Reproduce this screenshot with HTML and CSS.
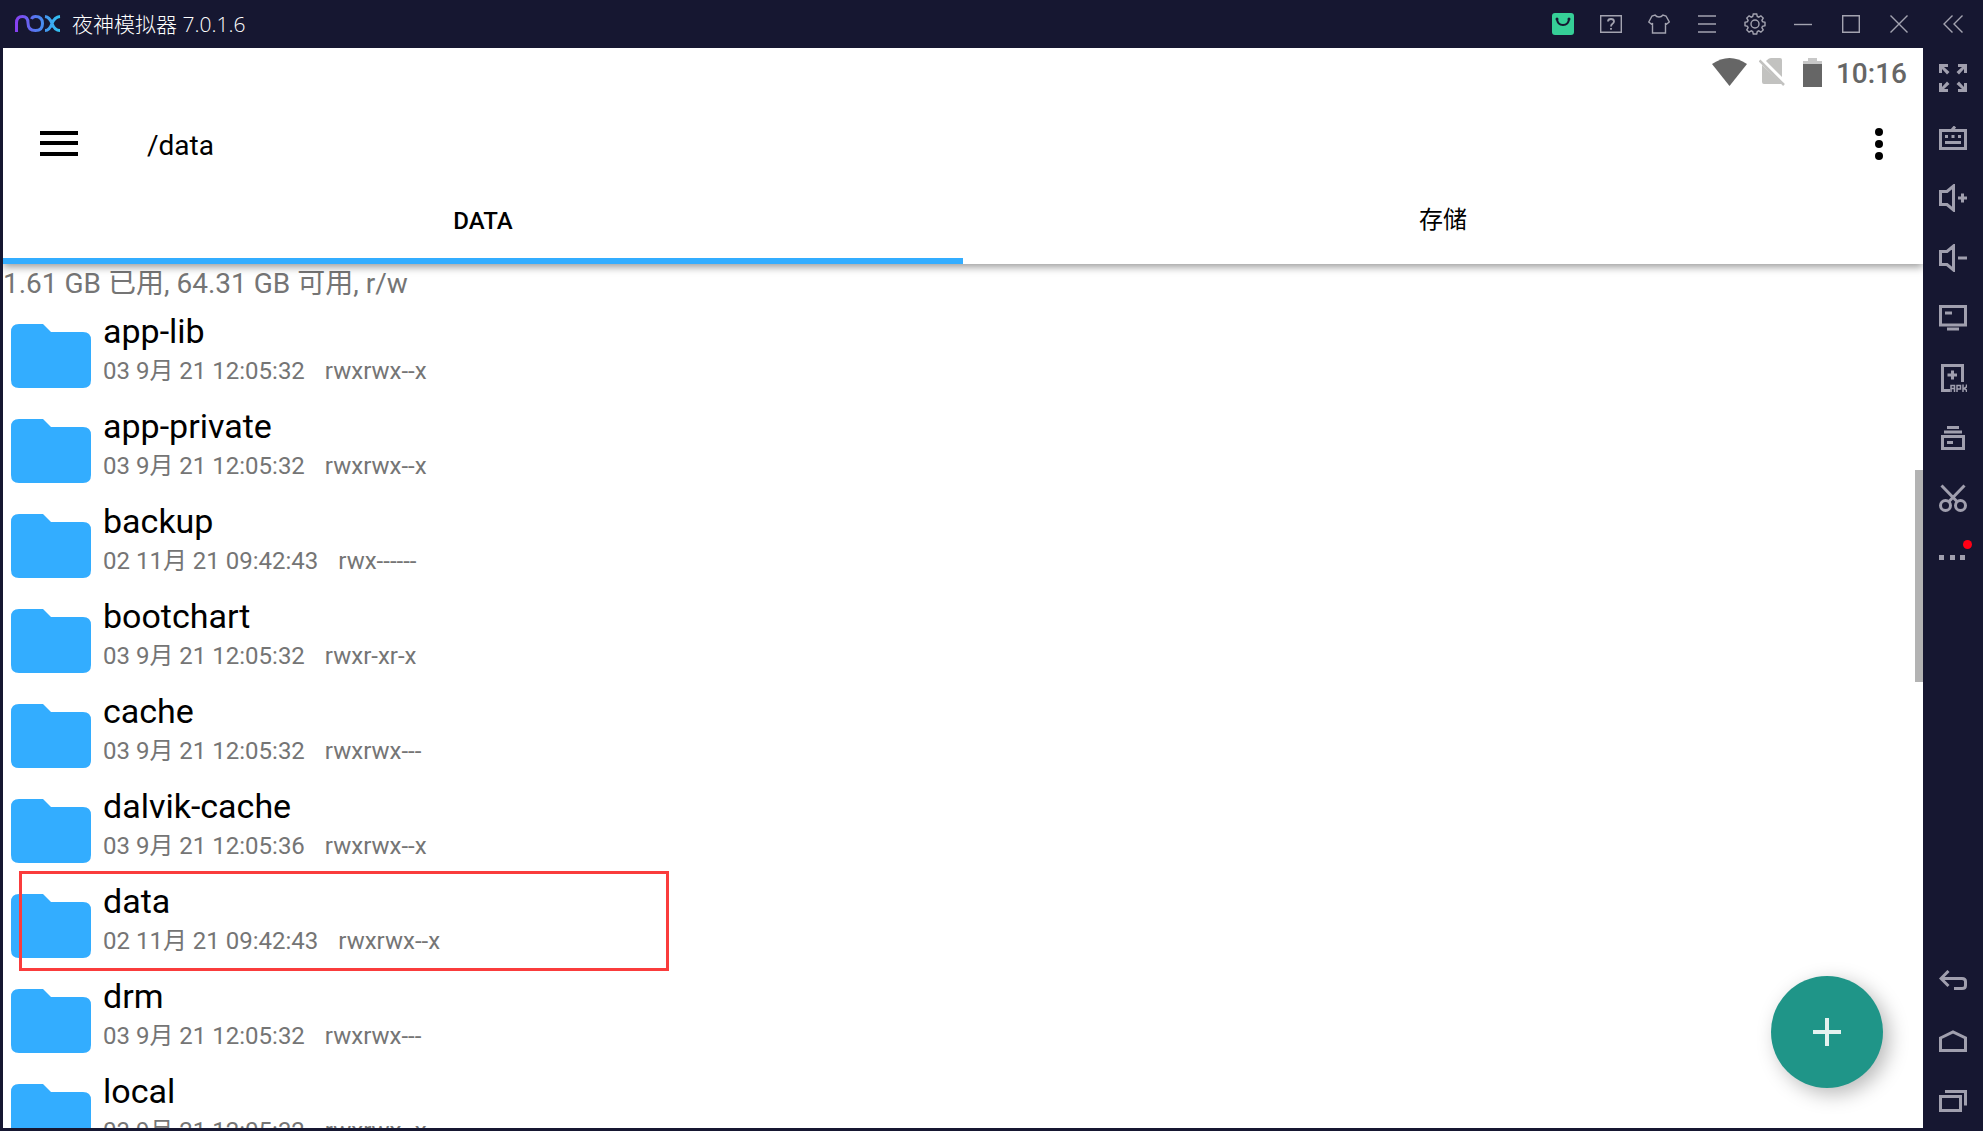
FILE: index.html
```html
<!DOCTYPE html>
<html lang="zh-CN">
<head>
    <meta charset="UTF-8">
    <meta name="viewport" content="width=device-width, initial-scale=1.0">
    <title>夜神模拟器</title>
    <link rel="stylesheet" href="styles.css">
</head>
<body>
    <svg class="sprite" aria-hidden="true">
        <symbol id="folder" viewBox="0 0 80 64">
            <path d="M32 0H8Q0 0 0 8V56Q0 64 8 64H72Q80 64 80 56V16Q80 8 72 8H40Z"/>
        </symbol>
    </svg>

    <header class="title-bar">
        <svg class="logo" viewBox="0 0 46 18" width="46" height="18" fill="none" stroke-width="3">
            <defs>
                <linearGradient id="nox" gradientUnits="userSpaceOnUse" x1="0" y1="0" x2="46" y2="0">
                    <stop offset="0" stop-color="#8a3df0"/>
                    <stop offset=".5" stop-color="#4f7ff0"/>
                    <stop offset="1" stop-color="#2fc8f2"/>
                </linearGradient>
            </defs>
            <path stroke="url(#nox)" d="M1.5 17V8Q1.500 1.500 7.500 1.500Q13 1.500 13 8Q13 15.500 20.500 15.500Q27.500 15.500 27.500 8.500Q27.500 1.500 20.500 1.500Q17.500 1.500 16.500 4M30 1.500Q34.500 2 37 8.500Q39.500 15.500 45 15.500M45 1.500Q39.500 2 37 8.500Q34.500 15.500 30 15.500"/>
        </svg>
        <h1 class="app-title">夜神模拟器 7.0.1.6</h1>
        <div class="window-buttons">
            <button class="bar-btn" aria-label="应用中心">
                <svg width="22" height="22" viewBox="0 0 22 22"><rect width="22" height="22" rx="3" fill="#36cf97"/><path d="M5 6Q5.500 12 11 12Q16.500 12 17 6" fill="none" stroke="#161731" stroke-width="2"/><circle cx="5" cy="6" r="1.500" fill="#161731"/><circle cx="17" cy="6" r="1.500" fill="#161731"/></svg>
            </button>
            <button class="bar-btn" aria-label="帮助">
                <svg class="line" width="22" height="18" viewBox="0 0 22 18"><path d="M.7.7H21.300V17.300H.7Z"/><path stroke-width="1.800" d="M8 6.500Q8 4 11 4Q14 4 14 6.500Q14 7.700 12.500 8.700Q11 9.700 11 11.500M11 13V14.800"/></svg>
            </button>
            <button class="bar-btn" aria-label="皮肤">
                <svg class="line" width="22" height="20" viewBox="0 0 22 20"><path d="M7 1Q8.500 3 11 3Q13.500 3 15 1L18 2L21.300 8L18 10.500L17.500 9V19H4.500V9L4 10.500L.8 8L4 2Z"/></svg>
            </button>
            <button class="bar-btn" aria-label="菜单">
                <svg class="line" width="18" height="18" viewBox="0 0 18 18"><path d="M0 1H18M0 9H18M0 17H18"/></svg>
            </button>
            <button class="bar-btn" aria-label="设置">
                <svg class="line" width="22" height="22" viewBox="0 0 22 22"><circle cx="11" cy="11" r="4"/><path d="M9.300 1H12.700L13.300 3.500L14.700 4.100L16.900 2.800L19.200 5.100L17.900 7.300L18.500 8.700L21 9.300V12.700L18.500 13.300L17.900 14.700L19.200 16.900L16.900 19.200L14.700 17.900L13.300 18.500L12.700 21H9.300L8.700 18.500L7.300 17.900L5.100 19.200L2.800 16.900L4.100 14.700L3.500 13.300L1 12.700V9.300L3.500 8.700L4.100 7.300L2.800 5.100L5.100 2.800L7.300 4.100L8.700 3.500Z"/></svg>
            </button>
            <button class="bar-btn" aria-label="最小化">
                <svg class="line" width="18" height="18" viewBox="0 0 18 18"><path d="M0 9.500H18"/></svg>
            </button>
            <button class="bar-btn" aria-label="最大化">
                <svg class="line" width="18" height="18" viewBox="0 0 18 18"><path d="M.7.7H17.300V17.300H.7Z"/></svg>
            </button>
            <button class="bar-btn" aria-label="关闭">
                <svg class="line" width="18" height="18" viewBox="0 0 18 18"><path d="M.5.5L17.500 17.500M17.500.5L.5 17.500"/></svg>
            </button>
            <button class="bar-btn side" aria-label="收起">
                <svg class="line" width="20" height="18" viewBox="0 0 20 18"><path d="M9.500.5L1 9L9.500 17.500M19.500.5L11 9L19.500 17.500"/></svg>
            </button>
        </div>
    </header>

    <div class="window">
        <main class="screen">
            <div class="app-bar">
                <div class="status-bar">
                    <svg class="wifi" width="35" height="28" viewBox="0 0 35 28"><path d="M0 6Q17.500-6 35 6L17.500 28Z"/></svg>
                    <svg class="no-sim" width="26" height="28" viewBox="0 0 26 28"><path d="M8 2Q10 0 12 0H21Q23 0 23 2V19L7 3ZM3 7L23 26Q22 26 21 26H5Q3 26 3 24Z"/><path d="M.5 2.500L25 27" fill="none" stroke="#c2c2c0" stroke-width="2.500"/></svg>
                    <svg class="battery" width="19" height="29" viewBox="0 0 19 29"><path fill="#c8c8c8" d="M5 0H14V3H19V6H0V3H5Z"/><path d="M0 6H19V29H0Z"/></svg>
                    <span class="clock">10:16</span>
                </div>
                <div class="toolbar">
                    <button class="icon-btn" aria-label="打开菜单">
                        <svg width="38" height="28" viewBox="0 0 38 28"><path d="M0 1H38V5H0ZM0 11H38V15H0ZM0 22H38V26H0Z"/></svg>
                    </button>
                    <h2 class="path">/data</h2>
                    <button class="icon-btn" aria-label="更多选项">
                        <svg width="8" height="32" viewBox="0 0 8 32"><circle cx="4" cy="4" r="4"/><circle cx="4" cy="16" r="4"/><circle cx="4" cy="28" r="4"/></svg>
                    </button>
                </div>
                <nav class="tabs">
                    <button class="tab active">DATA</button>
                    <button class="tab">存储</button>
                </nav>
            </div>

            <div class="content">
                <p class="usage">1.61 GB 已用, 64.31 GB 可用, r/w</p>
                <ul class="file-list">
                    <li class="file">
                        <svg class="folder"><use href="#folder"/></svg>
                        <div class="info">
                            <h3 class="name">app-lib</h3>
                            <p class="meta"><span>03 9月 21 12:05:32</span><span>rwxrwx--x</span></p>
                        </div>
                    </li>
                    <li class="file">
                        <svg class="folder"><use href="#folder"/></svg>
                        <div class="info">
                            <h3 class="name">app-private</h3>
                            <p class="meta"><span>03 9月 21 12:05:32</span><span>rwxrwx--x</span></p>
                        </div>
                    </li>
                    <li class="file">
                        <svg class="folder"><use href="#folder"/></svg>
                        <div class="info">
                            <h3 class="name">backup</h3>
                            <p class="meta"><span>02 11月 21 09:42:43</span><span>rwx------</span></p>
                        </div>
                    </li>
                    <li class="file">
                        <svg class="folder"><use href="#folder"/></svg>
                        <div class="info">
                            <h3 class="name">bootchart</h3>
                            <p class="meta"><span>03 9月 21 12:05:32</span><span>rwxr-xr-x</span></p>
                        </div>
                    </li>
                    <li class="file">
                        <svg class="folder"><use href="#folder"/></svg>
                        <div class="info">
                            <h3 class="name">cache</h3>
                            <p class="meta"><span>03 9月 21 12:05:32</span><span>rwxrwx---</span></p>
                        </div>
                    </li>
                    <li class="file">
                        <svg class="folder"><use href="#folder"/></svg>
                        <div class="info">
                            <h3 class="name">dalvik-cache</h3>
                            <p class="meta"><span>03 9月 21 12:05:36</span><span>rwxrwx--x</span></p>
                        </div>
                    </li>
                    <li class="file marked">
                        <svg class="folder"><use href="#folder"/></svg>
                        <div class="info">
                            <h3 class="name">data</h3>
                            <p class="meta"><span>02 11月 21 09:42:43</span><span>rwxrwx--x</span></p>
                        </div>
                    </li>
                    <li class="file">
                        <svg class="folder"><use href="#folder"/></svg>
                        <div class="info">
                            <h3 class="name">drm</h3>
                            <p class="meta"><span>03 9月 21 12:05:32</span><span>rwxrwx---</span></p>
                        </div>
                    </li>
                    <li class="file">
                        <svg class="folder"><use href="#folder"/></svg>
                        <div class="info">
                            <h3 class="name">local</h3>
                            <p class="meta"><span>03 9月 21 12:05:32</span><span>rwxrwx--x</span></p>
                        </div>
                    </li>
                </ul>
                <div class="scroll-thumb"></div>
            </div>
            <button class="fab" aria-label="新建">
                <svg width="28" height="28" viewBox="0 0 28 28"><path d="M12 0H16V12H28V16H16V28H12V16H0V12H12Z"/></svg>
            </button>
        </main>

        <aside class="side-bar">
            <button class="side-btn" aria-label="全屏">
                <svg class="solid" width="28" height="28" viewBox="0 0 28 28"><path d="M0 0H9V3H5L10.500 8L8 10.500L3 5V9H0ZM28 0V9H25V5L20 10.500L17.500 8L23 3H19V0ZM0 28V19H3V23L8 17.500L10.500 20L5 25H9V28ZM28 28H19V25H23L17.500 20L20 17.500L25 23V19H28Z"/></svg>
            </button>
            <button class="side-btn" aria-label="键盘控制">
                <svg class="thick" width="28" height="24" viewBox="0 0 28 24"><path d="M1.500 4.500H26.500V22.500H1.500ZM13 4L16 .5M6 10.500H9M12.500 10.500H15.500M19 10.500H22M6 16.500H22"/></svg>
            </button>
            <button class="side-btn" aria-label="音量加">
                <svg class="thick" width="28" height="28" viewBox="0 0 28 28"><path d="M1.500 7.500H8L14.500 2V26L8 20.500H1.500ZM19 14H28M23.500 9.500V18.500"/></svg>
            </button>
            <button class="side-btn" aria-label="音量减">
                <svg class="thick" width="28" height="28" viewBox="0 0 28 28"><path d="M1.500 7.500H8L14.500 2V26L8 20.500H1.500ZM19 14H28"/></svg>
            </button>
            <button class="side-btn" aria-label="虚拟桌面">
                <svg class="thick" width="28" height="26" viewBox="0 0 28 26"><path d="M1.500 1.500H26.500V20H1.500ZM6 8H13M8 24H20"/></svg>
            </button>
            <button class="side-btn" aria-label="安装 APK">
                <svg class="thick" width="28" height="28" viewBox="0 0 28 28"><path d="M23.500 18V1.500H3.500V26.500H11M8.500 11H18M13.500 6.500V15.500"/><path stroke-width="1.500" d="M12 28V21.500H15.500V28M12 24.500H15.500M18 28V21.500H21.500V25H18M24 20.500V28M27.500 20.500V23L25 24.500L27.500 26V28"/></svg>
            </button>
            <button class="side-btn" aria-label="多开管理">
                <svg class="thick" width="24" height="24" viewBox="0 0 24 24"><path d="M1.500 10.500H22.500V22.500H1.500ZM6 16.500H12M3 6H21M6 1.500H18"/></svg>
            </button>
            <button class="side-btn" aria-label="截图">
                <svg class="thick" width="28" height="28" viewBox="0 0 28 28"><circle cx="6.500" cy="21.500" r="5"/><circle cx="21.500" cy="21.500" r="5"/><path d="M2.500 1.500L18 17.500M25.500 1.500L10 17.500"/></svg>
            </button>
            <button class="side-btn" aria-label="更多">
                <svg class="solid" width="28" height="7" viewBox="0 0 28 7"><path d="M0 0H5V5H0ZM11 0H16V5H11ZM21 0H26V5H21Z"/></svg>
                <span class="dot"></span>
            </button>
            <button class="side-btn back" aria-label="返回">
                <svg class="thick" width="28" height="22" viewBox="0 0 28 22"><path d="M9.500 1L2 8.500L9.500 16M2 8.500H23Q26.500 8.500 26.500 11.500V15.500Q26.500 18.500 23 18.500H15"/></svg>
            </button>
            <button class="side-btn" aria-label="主页">
                <svg class="thick" width="28" height="22" viewBox="0 0 28 22"><path d="M1.500 8L14 2L26.500 8V20.500H1.500Z"/></svg>
            </button>
            <button class="side-btn" aria-label="最近任务">
                <svg class="thick" width="28" height="22" viewBox="0 0 28 22"><path d="M1.500 6.500H21.500V20.500H1.500ZM6 1.500H26.500V15.500"/></svg>
            </button>
        </aside>
    </div>
</body>
</html>
```
FILE: styles.css
```css
*, *::after {
    box-sizing: border-box;
}
body {
    display: flex;
    flex-direction: column;
    height: 100vh;
    margin: 0;
    overflow: hidden;
    background-color: #161731;
    font-family: Roboto, "Noto Sans CJK SC", sans-serif;
}
h1, h2, h3, p, ul {
    margin: 0;
    padding: 0;
    font-weight: 400;
}
button {
    display: flex;
    align-items: center;
    justify-content: center;
    padding: 0;
    border: none;
    background: none;
    font-family: inherit;
    cursor: pointer;
}
svg {
    display: block;
    flex-shrink: 0;
}
.sprite {
    display: none;
}
.line {
    fill: none;
    stroke: #a3a3b0;
    stroke-width: 1.4;
}
.thick {
    fill: none;
    stroke: #a09fae;
    stroke-width: 3;
}
.solid {
    fill: #a09fae;
}

/* title bar */
.title-bar {
    display: flex;
    align-items: center;
    height: 48px;
    padding-left: 15px;
    flex-shrink: 0;
}
.app-title {
    flex: 1;
    margin-left: 11px;
    color: white;
    font-family: "Open Sans", "Noto Sans CJK SC", sans-serif;
    font-size: 21px;
    font-weight: 300;
    line-height: 28px;
}
.window-buttons {
    display: flex;
}
.bar-btn {
    width: 48px;
    height: 48px;
}
.bar-btn.side {
    width: 60px;
}

.window {
    display: flex;
    flex: 1;
    min-height: 0;
}

/* android screen */
.screen {
    position: relative;
    display: flex;
    flex-direction: column;
    flex: 1;
    margin: 0 0 3px 3px;
    overflow: hidden;
    background-color: white;
}
.app-bar {
    position: relative;
    z-index: 1;
    flex-shrink: 0;
    background-color: white;
    box-shadow: 0 3px 8px rgba(0,0,0,0.4);
}
.status-bar {
    display: flex;
    align-items: center;
    justify-content: flex-end;
    height: 48px;
    padding-right: 16px;
    fill: #666;
}
.no-sim {
    margin-left: 12px;
    fill: #c2c2c0;
}
.battery {
    margin-left: 18px;
}
.clock {
    margin-left: 14px;
    padding-top: 2px;
    color: #666;
    font-size: 28px;
    font-weight: 500;
}
.toolbar {
    display: flex;
    align-items: center;
    height: 96px;
    padding: 0 8px 0 20px;
}
.icon-btn {
    width: 72px;
    height: 72px;
}
.path {
    flex: 1;
    margin-left: 52px;
    padding-top: 2px;
    font-size: 28px;
}
.tabs {
    display: flex;
    height: 72px;
}
.tab {
    flex: 1;
    padding-bottom: 10px;
    border-bottom: 6px solid transparent;
    color: black;
    font-size: 24px;
    line-height: 28px;
}
.tab.active {
    padding-bottom: 8px;
    border-bottom-color: #33adff;
    font-weight: 500;
}

.content {
    position: relative;
    flex: 1;
    min-height: 0;
}
.usage {
    height: 45px;
    color: #757575;
    font-size: 28px;
    line-height: 40px;
}
.file-list {
    list-style: none;
}
.file {
    position: relative;
    display: flex;
    height: 95px;
    padding-left: 8px;
}
.folder {
    width: 80px;
    height: 64px;
    margin-top: 15px;
    fill: #33adff;
}
.info {
    margin-left: 12px;
}
.name {
    font-size: 34px;
    line-height: 44px;
}
.meta {
    display: flex;
    gap: 20px;
    color: #757575;
    font-size: 24px;
    line-height: 36px;
}
.marked::after {
    content: "";
    position: absolute;
    top: -8px;
    left: 16px;
    width: 650px;
    height: 100px;
    border: 3px solid #fa3c3c;
}
.scroll-thumb {
    position: absolute;
    top: 206px;
    right: 0;
    width: 8px;
    height: 212px;
    background-color: #b3b3b3;
}
.fab {
    position: absolute;
    right: 40px;
    bottom: 40px;
    width: 112px;
    height: 112px;
    border-radius: 50%;
    background-color: #1f9588;
    box-shadow: 6px 6px 20px rgba(0,0,0,0.28);
    fill: #e4f2f0;
}

/* emulator tools */
.side-bar {
    display: flex;
    flex-direction: column;
    width: 60px;
}
.side-btn {
    position: relative;
    width: 60px;
    height: 60px;
}
.back {
    margin-top: auto;
}
.dot {
    position: absolute;
    top: 12px;
    right: 11px;
    width: 9px;
    height: 9px;
    border-radius: 50%;
    background-color: #ff0015;
}
```
